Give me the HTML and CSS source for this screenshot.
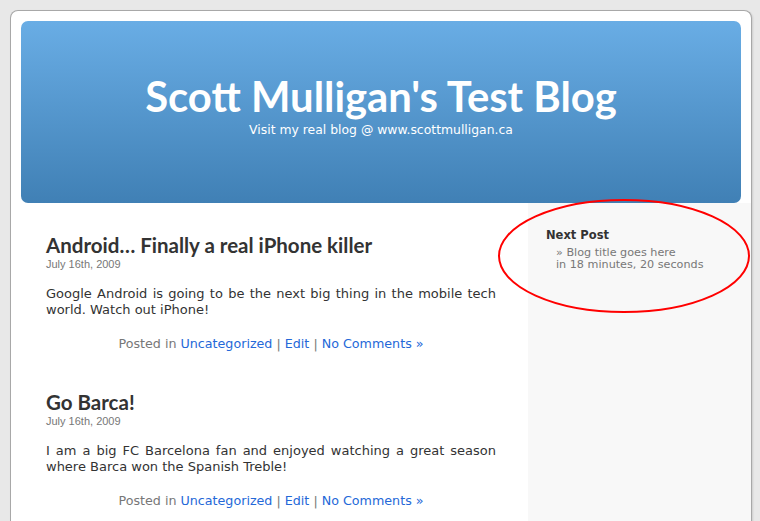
FILE: index.html
```html
<!DOCTYPE html>
<html>
<head>
<meta charset="utf-8">
<link rel="stylesheet" href="styles.css">
</head>
<body>
<div class="page">
  <header class="header">
    <h1 class="site-title">Scott Mulligan's Test Blog</h1>
    <div class="site-desc">Visit my real blog @ www.scottmulligan.ca</div>
  </header>
  <div class="content">
    <main class="main">
      <article class="post">
        <h2 class="post-title">Android… Finally a real iPhone killer</h2>
        <div class="post-date">July 16th, 2009</div>
        <p class="post-body">Google Android is going to be the next big thing in the mobile tech world. Watch out iPhone!</p>
        <p class="post-meta">Posted in <a href="#">Uncategorized</a> | <a href="#">Edit</a> | <a href="#">No Comments »</a></p>
      </article>
      <article class="post">
        <h2 class="post-title">Go Barca!</h2>
        <div class="post-date">July 16th, 2009</div>
        <p class="post-body">I am a big FC Barcelona fan and enjoyed watching a great season where Barca won the Spanish Treble!</p>
        <p class="post-meta">Posted in <a href="#">Uncategorized</a> | <a href="#">Edit</a> | <a href="#">No Comments »</a></p>
      </article>
    </main>
    <aside class="sidebar">
      <h3 class="widget-title">Next Post</h3>
      <div class="widget-line">» Blog title goes here</div>
      <div class="widget-line">in 18 minutes, 20 seconds</div>
    </aside>
  </div>
  <svg class="circle" width="256" height="118" viewBox="0 0 256 118">
    <ellipse cx="128" cy="59" rx="125" ry="56" fill="none" stroke="#f00" stroke-width="2"/>
  </svg>
</div>
</body>
</html>
```
FILE: styles.css
```css
html, body {
  margin: 0;
  padding: 0;
  background: #e8e8e8;
}
body {
  font-family: "DejaVu Sans", Verdana, sans-serif;
  color: #333;
  overflow: hidden;
  height: 521px;
}
.page {
  position: relative;
  margin: 10px 0 0 10px;
  width: 740px;
  height: 520px;
  overflow: hidden;
  background: #fff;
  border: 1px solid #a8a8a8;
  border-bottom: 0;
  border-radius: 8px 8px 0 0;
  box-shadow: 1px 1px 2px rgba(0,0,0,0.12);
}
.header {
  margin: 10px 10px 0 10px;
  height: 182px;
  border-radius: 7px;
  background: linear-gradient(#69ade5, #4080b5);
  color: #fff;
  text-align: center;
  padding-top: 51px;
  box-sizing: border-box;
}
.site-title {
  margin: 0;
  font-family: "Lato", sans-serif;
  font-weight: 700;
  font-size: 41.8px;
  line-height: 48px;
}
.site-desc {
  margin-top: 2px;
  font-size: 12.4px;
  line-height: 16px;
}
.content {
  display: flex;
}
.main {
  width: 517px;
  box-sizing: border-box;
  padding: 30px 32px 0 35px;
}
.sidebar {
  flex: 1;
  background: #f8f8f8;
  min-height: 400px;
  padding: 24px 18px;
}
.post {
  margin-bottom: 38px;
}
.post-title {
  margin: 0;
  font-family: "Lato", sans-serif;
  font-size: 20.5px;
  line-height: 24px;
  font-weight: 700;
  color: #333;
}
.post-date {
  font-family: "Liberation Sans", Arial, sans-serif;
  font-size: 11px;
  color: #777;
  line-height: 14px;
}
.post-body {
  margin: 15px 0 0;
  font-size: 13px;
  line-height: 16px;
  text-align: justify;
}
.post-meta {
  margin: 18px 0 0;
  font-size: 12.7px;
  line-height: 16px;
  text-align: center;
  color: #777;
}
.post-meta a {
  color: #2468d8;
  text-decoration: none;
}
.widget-title {
  margin: 0 0 4px;
  font-size: 11.5px;
  font-weight: bold;
  color: #333;
  line-height: 16px;
}
.widget-line {
  padding-left: 10px;
  font-size: 11.2px;
  line-height: 12px;
  color: #777;
}
.circle {
  position: absolute;
  left: 485px;
  top: 186px;
}
```
